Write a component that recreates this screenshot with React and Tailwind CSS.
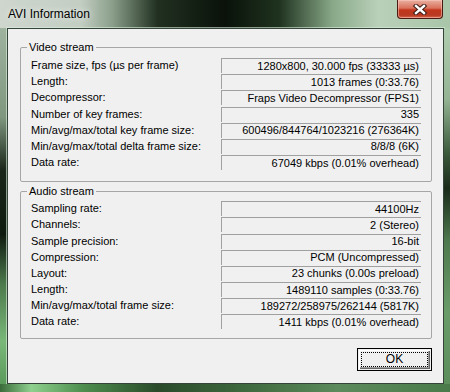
import React from "react";

const video = [
  ["Frame size, fps (\u00b5s per frame)", "1280x800, 30.000 fps (33333 \u00b5s)"],
  ["Length:", "1013 frames (0:33.76)"],
  ["Decompressor:", "Fraps Video Decompressor (FPS1)"],
  ["Number of key frames:", "335"],
  ["Min/avg/max/total key frame size:", "600496/844764/1023216 (276364K)"],
  ["Min/avg/max/total delta frame size:", "8/8/8 (6K)"],
  ["Data rate:", "67049 kbps (0.01% overhead)"],
];

const audio = [
  ["Sampling rate:", "44100Hz"],
  ["Channels:", "2 (Stereo)"],
  ["Sample precision:", "16-bit"],
  ["Compression:", "PCM (Uncompressed)"],
  ["Layout:", "23 chunks (0.00s preload)"],
  ["Length:", "1489110 samples (0:33.76)"],
  ["Min/avg/max/total frame size:", "189272/258975/262144 (5817K)"],
  ["Data rate:", "1411 kbps (0.01% overhead)"],
];

function Row({ label, value }) {
  return (
    <div className="flex h-[15px] items-center">
      <div className="w-[200px] pl-[10px] leading-[13px] whitespace-nowrap">{label}</div>
      <div className="w-[200px] h-[15px] box-border border-t border-l border-[#a0a0a0] border-b-white border-r-white flex items-center justify-end pr-[2px] leading-[13px] whitespace-nowrap">
        {value}
      </div>
    </div>
  );
}

function Group({ title, rows, pt, pb }) {
  return (
    <fieldset className="border border-[#a6a6a6] rounded-[2px] w-[412px] m-0 p-0">
      <legend className="ml-[6px] px-[2px] h-[13px] leading-[13px]">{title}</legend>
      <div className={`flex flex-col gap-[1.2px] ${pt} ${pb}`}>
        {rows.map(([l, v], i) => (
          <Row key={i} label={l} value={v} />
        ))}
      </div>
    </fieldset>
  );
}

export default function App() {
  return (
    <div
      className="w-[450px] h-[392px] flex flex-col overflow-hidden text-[11px] text-black bg-[#7a957a]"
      style={{ fontFamily: '"Liberation Sans", Arial, sans-serif' }}
    >
      {/* Title bar */}
      <div className="h-[28px] flex items-start bg-[linear-gradient(90deg,#ced6ce_0%,#c3cec3_18%,#8a9e8a_25%,#213021_35%,#0a120a_50%,#1f321f_62%,#89a989_74%,#b9d0b9_84%,#a9c6a9_100%)]">
        <div className="pl-[8px] pt-[7px] text-[12px] leading-[15px] text-black [text-shadow:0_0_6px_rgba(255,255,255,0.9)] flex-1">
          AVI Information
        </div>
        <div className="mr-[7px] w-[46px] h-[19px] rounded-b-[4px] border border-t-0 border-[#4a1a12] bg-[linear-gradient(180deg,#e9b0a2_0%,#d9715c_45%,#c2361c_55%,#b93a22_85%,#d86a50_100%)] flex items-center justify-center shadow-[inset_0_0_0_1px_rgba(255,210,200,0.5)]">
          <svg width="14" height="11" viewBox="0 0 14 11">
            <path d="M3 2 L11 9 M11 2 L3 9" stroke="#3a1a14" strokeWidth="4.4" strokeLinecap="square" />
            <path d="M3 2 L11 9 M11 2 L3 9" stroke="#ffffff" strokeWidth="2.4" strokeLinecap="square" />
          </svg>
        </div>
      </div>

      {/* Middle */}
      <div className="flex h-[356px]">
        <div className="w-[7px] bg-[linear-gradient(180deg,#9fb39f_0%,#7f977f_25%,#1a261a_40%,#0f1a0f_58%,#4d7a4d_72%,#79b879_88%,#5a9a5a_100%)]" />
        <div className="w-[437px] border border-[#34443a] bg-[#f0f0f0] flex flex-col pl-[12px] pt-[12px] shadow-[0_0_0_1px_rgba(220,240,220,0.6)]">
          <Group title="Video stream" rows={video} pt="pt-[4px]" pb="pb-[11px]" />
          <div className="h-[3px]" />
          <Group title="Audio stream" rows={audio} pt="pt-[3px]" pb="pb-[9px]" />
          <div className="flex justify-end pr-[11px] mt-[9px]">
            <div className="w-[75px] h-[23px] border border-black bg-[#f0f0f0] p-[1px] box-border">
              <div className="w-full h-full shadow-[inset_1px_1px_0_#ffffff,inset_-1px_-1px_0_#696969,inset_-2px_-2px_0_#a0a0a0] p-[2px] box-border">
                <div className="w-full h-full border border-dotted border-black flex items-center justify-center text-[12px] leading-[13px]">
                  OK
                </div>
              </div>
            </div>
          </div>
        </div>
        <div className="w-[6px] bg-[linear-gradient(180deg,#b0ccb0_0%,#94b494_20%,#3c5a3c_35%,#1a2a1a_45%,#4f7a4f_60%,#6a9c6a_80%,#5c8e5c_100%)]" />
      </div>

      {/* Bottom frame */}
      <div className="h-[8px] bg-[linear-gradient(90deg,#3a6a3a_0%,#8fd08f_7%,#4f8f4f_18%,#2a4a2a_35%,#3f6a3f_55%,#5c8a5c_75%,#4a7a4a_100%)]" />
    </div>
  );
}
